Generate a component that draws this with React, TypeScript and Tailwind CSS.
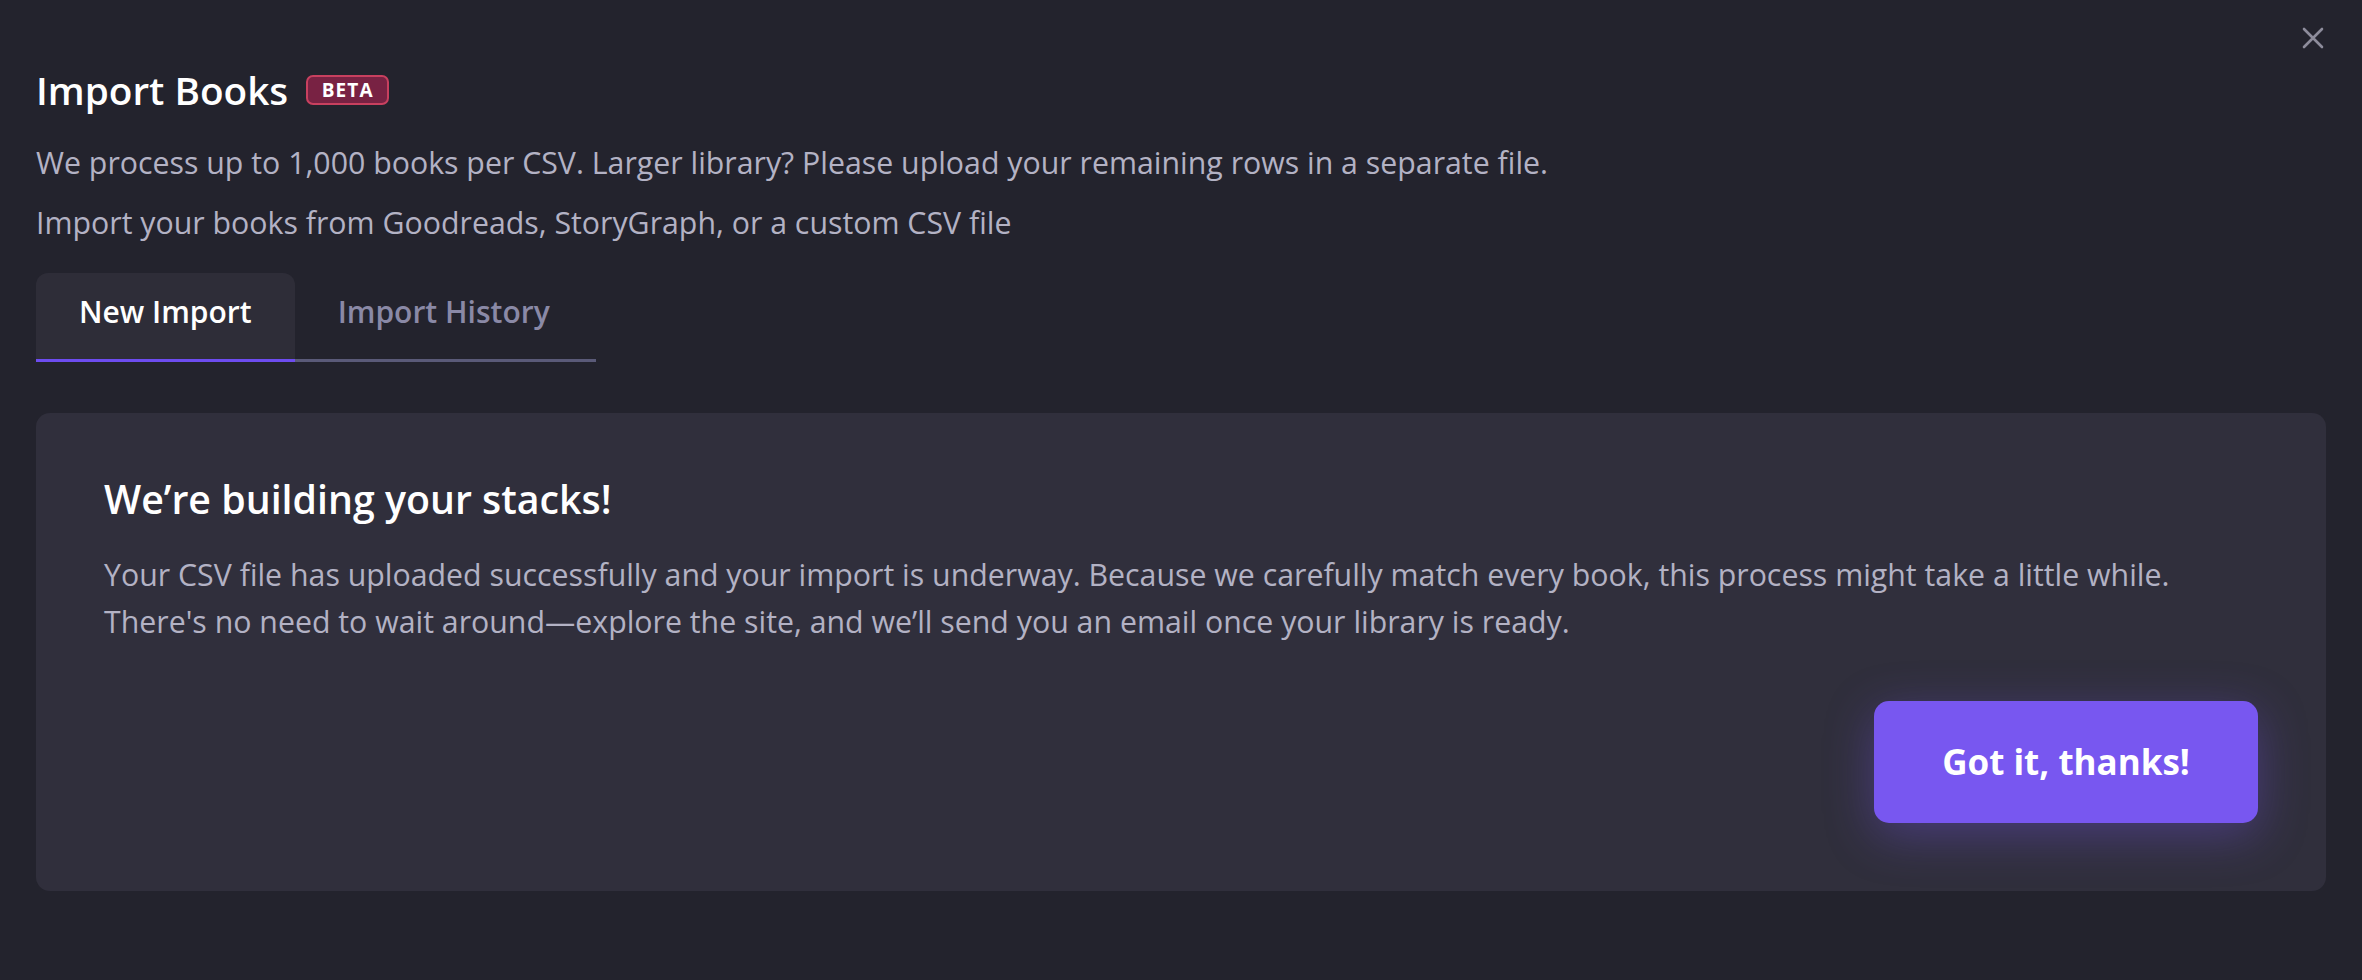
import React, { useState } from 'react';

const tabs = [
  { id: 'new', label: 'New Import' },
  { id: 'history', label: 'Import History' },
];

const CloseIcon = () => (
  <svg width="22" height="22" viewBox="0 0 22 22" fill="none" stroke="currentColor" strokeWidth="2.6" strokeLinecap="round">
    <path d="M2 2L20 20M20 2L2 20" />
  </svg>
);

export default function App() {
  const [activeTab, setActiveTab] = useState('new');

  return (
    <div className="relative min-h-screen bg-[#23232d] px-[36px] pt-[66px] font-['Open_Sans',sans-serif]">
      {/* Close */}
      <button className="absolute right-[38px] top-[27px] text-[#8d8c9b]">
        <CloseIcon />
      </button>

      {/* Header */}
      <div className="flex h-[48px] items-center gap-[18px]">
        <h1 className="text-[38.7px] font-semibold leading-[48px] text-white">Import Books</h1>
        <span className="flex h-[30px] w-[83px] items-center justify-center rounded-[7px] border-2 border-[#c8405f] bg-[#782243] text-[19px] font-bold tracking-[0.06em] text-white">
          BETA
        </span>
      </div>
      <p className="mt-[19px] text-[30.3px] leading-[60px] text-[#b3b2c4]">
        We process up to 1,000 books per CSV. Larger library? Please upload your remaining rows in a separate file.
      </p>
      <p className="text-[30.3px] leading-[60px] text-[#b3b2c4]">
        Import your books from Goodreads, StoryGraph, or a custom CSV file
      </p>

      {/* Tabs */}
      <div className="mt-[20px] flex w-[560px] border-b-[3px] border-[#5a5a78]">
        {tabs.map((tab) => {
          const isActive = activeTab === tab.id;
          return (
            <button
              key={tab.id}
              onClick={() => setActiveTab(tab.id)}
              className={`-mb-[3px] h-[89px] rounded-t-[12px] border-b-[3px] px-[43px] pb-[30px] pt-[22px] text-[30px] font-semibold leading-[34px] ${
                isActive
                  ? 'border-[#6d4cf0] bg-[#2e2d38] text-white'
                  : 'border-transparent text-[#8a89a6]'
              }`}
            >
              {tab.label}
            </button>
          );
        })}
      </div>

      {/* Status card */}
      <div className="mt-[51px] rounded-[14px] bg-[#302f3c] p-[68px]">
        <h2 className="text-[39.3px] font-semibold leading-[36px] text-white">We’re building your stacks!</h2>
        <p className="mt-[34px] text-[30.3px] leading-[47px] text-[#b3b2c4]">
          Your CSV file has uploaded successfully and your import is underway. Because we carefully match every book, this process might take a little while.
          <br />
          There's no need to wait around—explore the site, and we’ll send you an email once your library is ready.
        </p>
        <div className="mt-[56px] flex justify-end">
          <button className="flex h-[122px] w-[384px] items-center justify-center rounded-[15px] bg-[#7857f0] text-[35px] font-bold text-white shadow-[0_12px_48px_rgba(120,87,240,0.35)]">
            Got it, thanks!
          </button>
        </div>
      </div>
    </div>
  );
}
